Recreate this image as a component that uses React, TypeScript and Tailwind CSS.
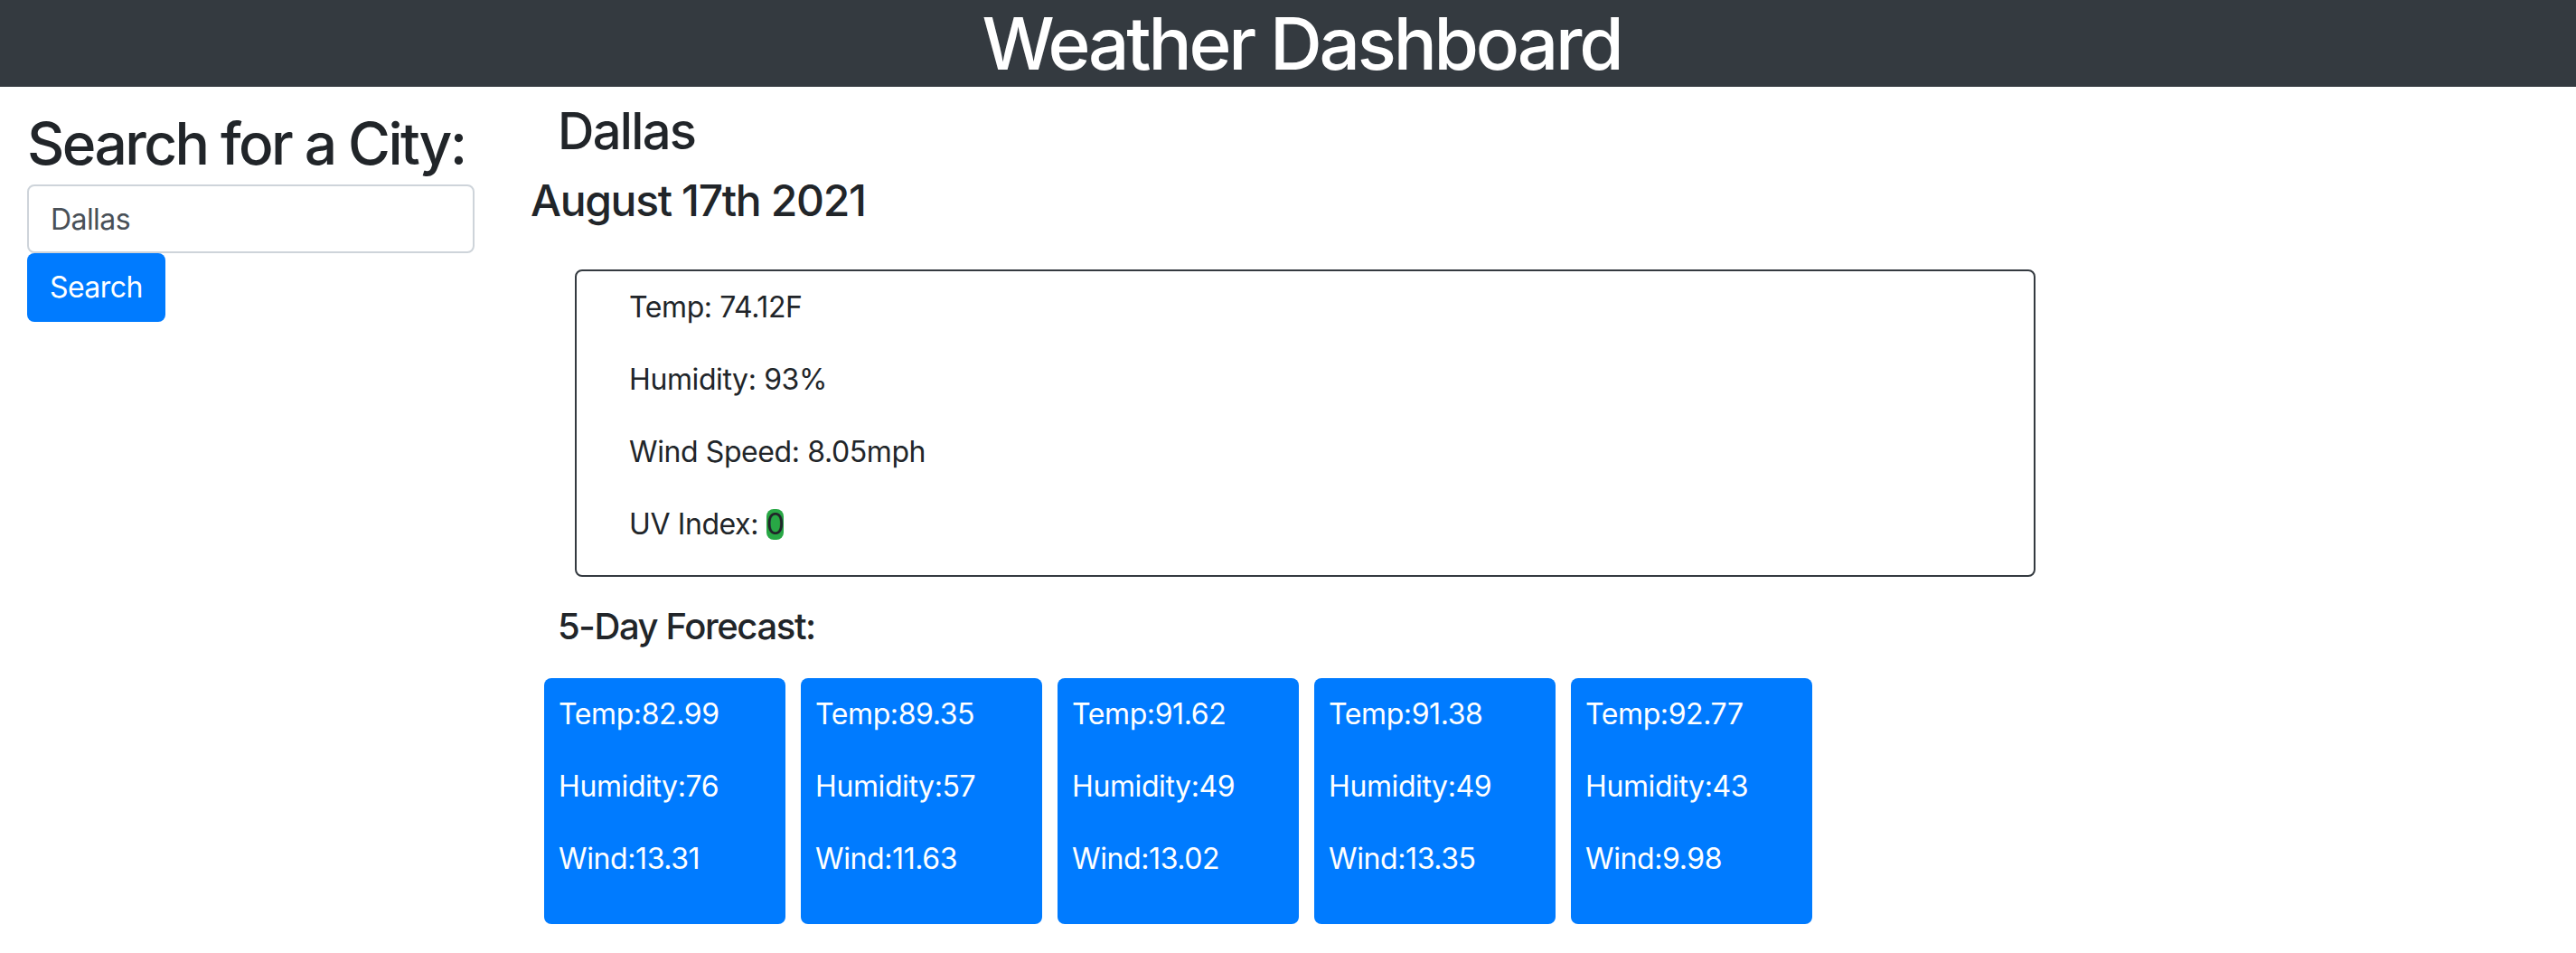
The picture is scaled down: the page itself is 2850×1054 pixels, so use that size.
const forecast = [
  { temp: '82.99', humidity: '76', wind: '13.31' },
  { temp: '89.35', humidity: '57', wind: '11.63' },
  { temp: '91.62', humidity: '49', wind: '13.02' },
  { temp: '91.38', humidity: '49', wind: '13.35' },
  { temp: '92.77', humidity: '43', wind: '9.98' },
]

function SearchPanel() {
  return (
    <aside className="w-[557px] shrink-0 pl-[30px] pr-[32px]">
      <h2 className="mt-[24px] mb-[7px] text-[64px] leading-[77px] font-medium tracking-[-0.04em] whitespace-nowrap">
        Search for a City:
      </h2>
      <input
        type="text"
        defaultValue="Dallas"
        className="block w-[495px] h-[76px] px-[24px] border-2 border-[#ced4da] rounded-[8px] text-[32px] tracking-[-0.018em] text-[#495057] outline-none"
      />
      <button
        type="button"
        className="block h-[76px] px-[25px] bg-[#007bff] text-white text-[32px] tracking-[-0.018em] rounded-[8px]"
      >
        Search
      </button>
    </aside>
  )
}

function CurrentWeather() {
  const rows = ['Temp: 74.12F', 'Humidity: 93%', 'Wind Speed: 8.05mph']
  return (
    <div className="ml-[49px] mt-[47px] w-[1616px] border-2 border-[#343a40] rounded-[8px] pt-[16px] pl-[58px]">
      {rows.map(r => (
        <p key={r} className="text-[32px] leading-[48px] mb-[32px]">{r}</p>
      ))}
      <p className="text-[32px] leading-[48px] mb-[32px]">
        UV Index: <span className="inline-block h-[34px] leading-[34px] bg-[#28a745] rounded-[8px]">0</span>
      </p>
    </div>
  )
}

function ForecastCard({ temp, humidity, wind }: { temp: string; humidity: string; wind: string }) {
  return (
    <div className="w-[267px] bg-[#007bff] text-white rounded-[8px] p-[16px]">
      <p className="text-[32px] leading-[48px] mb-[32px]">Temp:{temp}</p>
      <p className="text-[32px] leading-[48px] mb-[32px]">Humidity:{humidity}</p>
      <p className="text-[32px] leading-[48px] mb-[32px]">Wind:{wind}</p>
    </div>
  )
}

export default function App() {
  return (
    <div className="min-h-screen bg-white text-[#212529] font-['Inter',sans-serif] tracking-[-0.025em]">
      <header className="h-[96px] bg-[#343a40] text-center pl-[30px]">
        <h1 className="text-[80px] leading-[96px] text-white font-medium tracking-[-0.04em]">Weather Dashboard</h1>
      </header>
      <div className="flex">
        <SearchPanel />
        <main className="flex-1 pl-[30px]">
          <h3 className="ml-[30px] mt-[16px] text-[56px] leading-[67px] font-medium tracking-[-0.03em]">Dallas</h3>
          <h4 className="mt-[14px] text-[48px] leading-[58px] font-medium tracking-[-0.028em]">August 17th 2021</h4>
          <CurrentWeather />
          <h5 className="ml-[30px] mt-[31px] text-[40px] leading-[48px] font-medium tracking-[-0.035em]">
            5-Day Forecast:
          </h5>
          <div className="ml-[15px] mt-[33px] flex gap-[17px]">
            {forecast.map((d, i) => (
              <ForecastCard key={i} {...d} />
            ))}
          </div>
        </main>
      </div>
    </div>
  )
}
